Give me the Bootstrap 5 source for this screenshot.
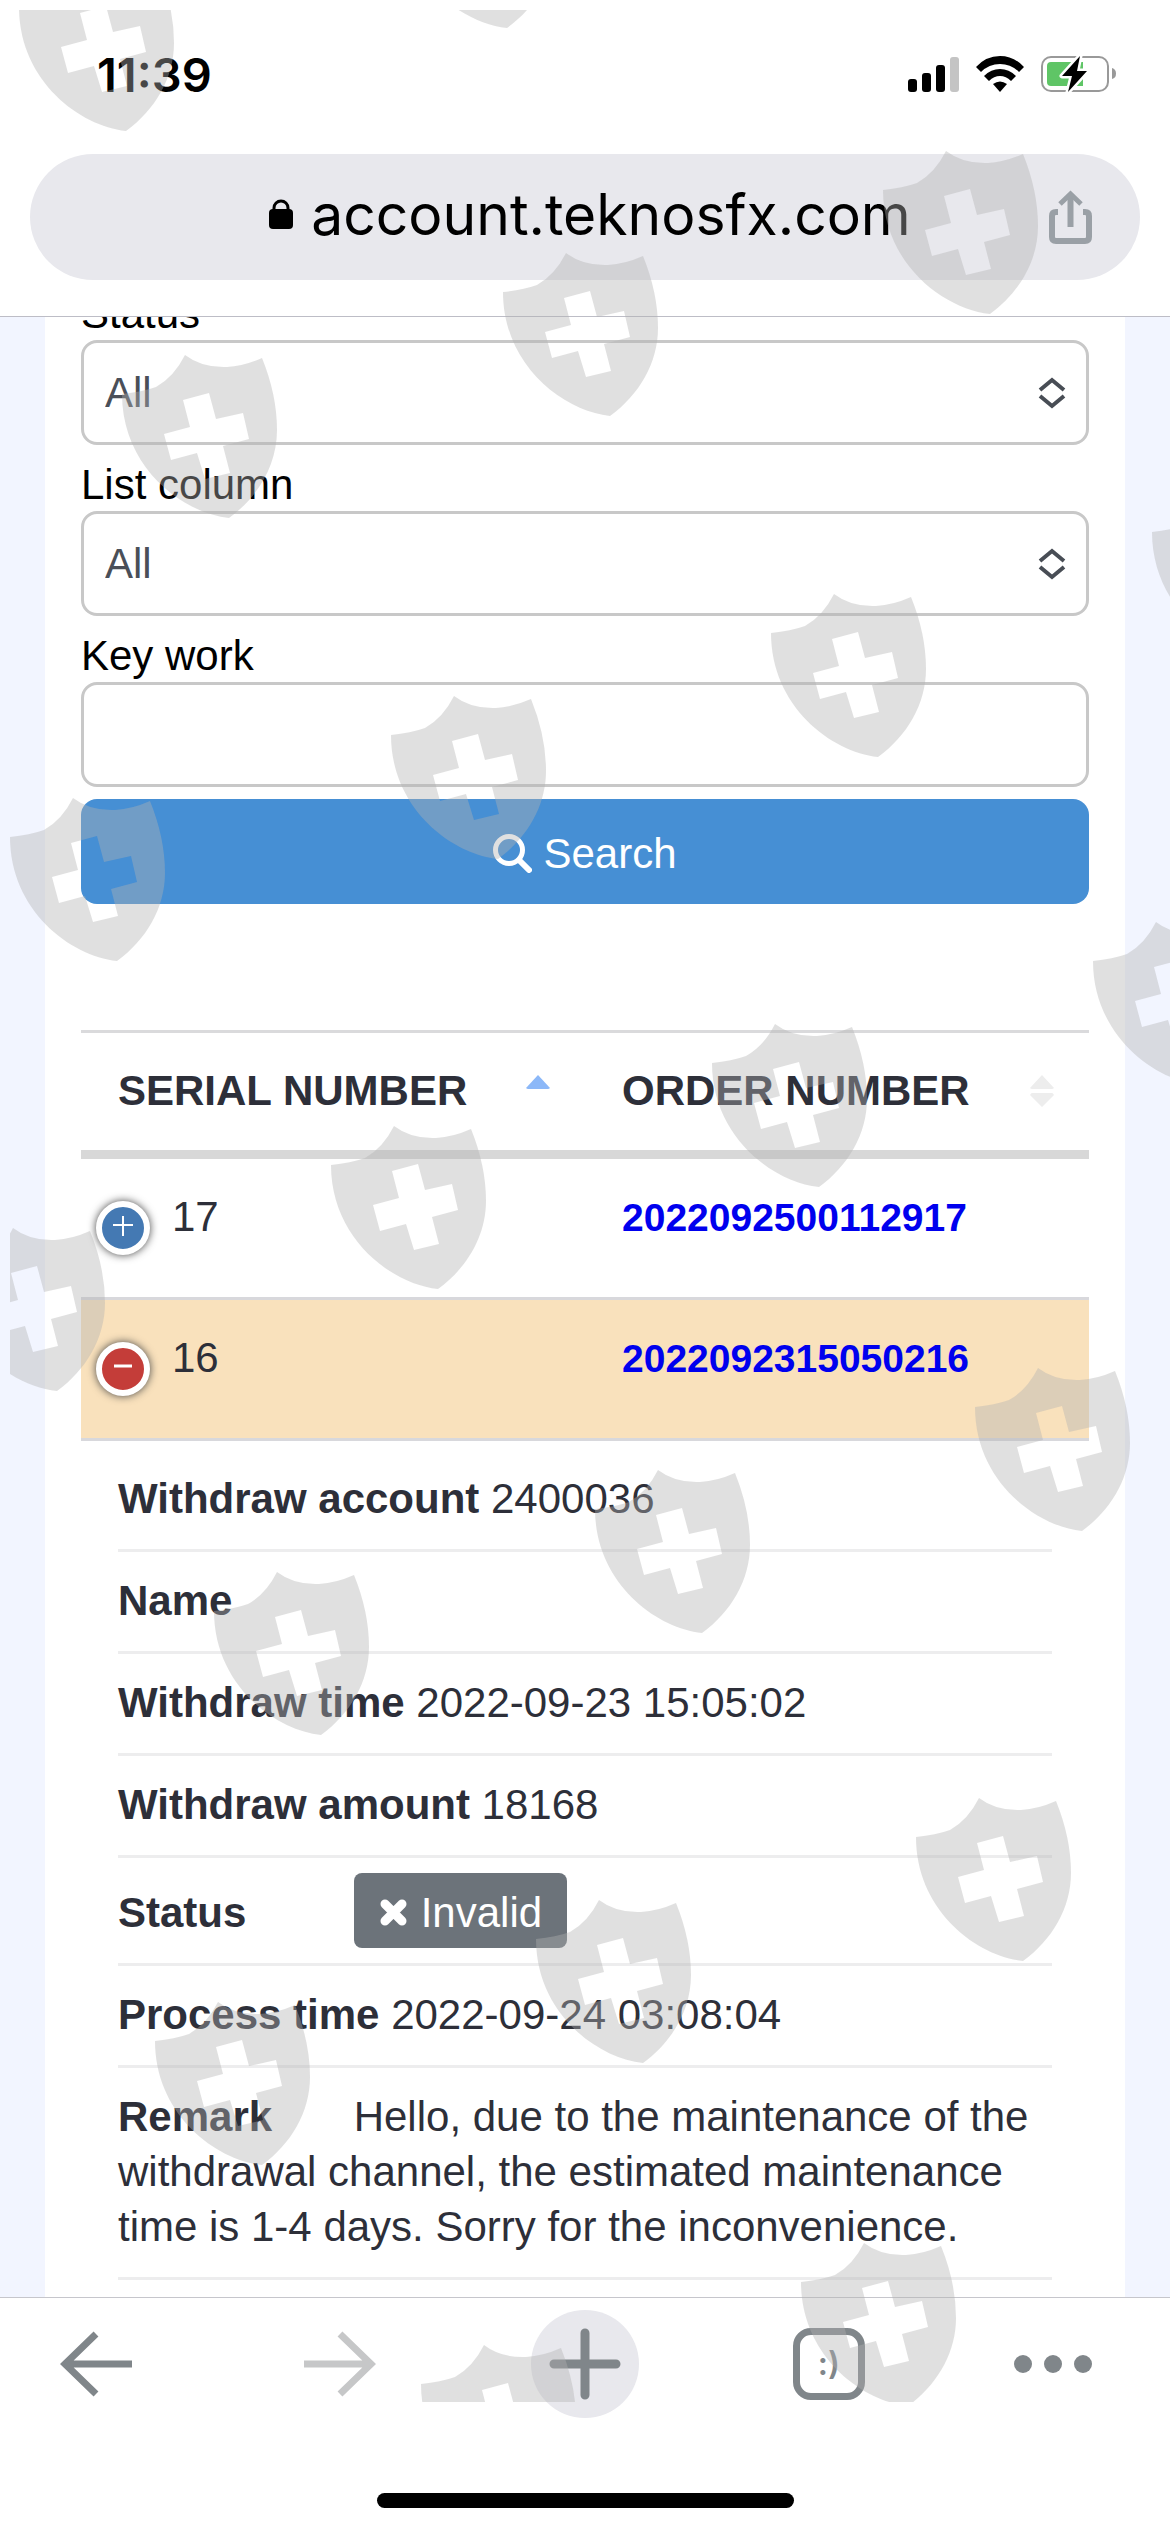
<!DOCTYPE html>
<html lang="en">
<head>
<meta charset="utf-8">
<meta name="viewport" content="width=device-width, initial-scale=1">
<title>Withdraw records</title>
<link href="https://cdn.jsdelivr.net/npm/bootstrap@5.3.0/dist/css/bootstrap.min.css" rel="stylesheet">
<style>
  body { font-family: "Liberation Sans", Arial, sans-serif; font-size: 42px; line-height: 55px; color: #2d2f39; background: #fff; }
  .screen { height: 100vh; min-height: 1200px; }
  svg { display: block; flex: none; }

  /* phone status bar and address bar */
  .top-chrome { border-bottom: 1px solid #bdbdc6; padding-bottom: 36px; font-family: Inter, sans-serif; color: #000; }
  .phone-status { height: 154px; padding: 0 54px 6px 97px; }
  .phone-status time { font-size: 47px; font-weight: 600; }
  .phone-icons { gap: 17px; }
  .address-pill { margin: 0 30px; height: 126px; border-radius: 63px; background: #e8e8ed; padding: 0 48px 0 101px; }
  .address-pill a { color: #000; font-size: 57px; gap: 18px; padding-bottom: 6px; }
  .plain-btn { border: 0; background: none; padding: 0; }

  /* scrolled page */
  .page-view { background: #f2f5ff; padding: 0 45px; min-height: 0; }
  .record-panel { background: #fff; padding: 0 36px; min-height: 150%; margin-top: -43px; }
  .field-label { display: block; line-height: 52px; padding-top: 14px; color: #000; }
  .form-select, .form-control { height: 105px; font-size: 42px; line-height: 63px; border: 3px solid #c8c8c8; border-radius: 16px; padding: 0 21px; color: #4a4f58; }
  .form-select { background-image: url("data:image/svg+xml,%3Csvg xmlns='http://www.w3.org/2000/svg' viewBox='0 0 28 32'%3E%3Cpath d='M2 13 14 3 26 13M2 19 14 29 26 19' fill='none' stroke='%23484d55' stroke-width='4'/%3E%3C/svg%3E"); background-size: 28px 32px; background-position: right 20px center; }
  .search-btn { height: 105px; margin-top: 12px; border-radius: 16px; background: #468fd4; color: #fff; font-size: 42px; gap: 11px; border: 0; padding-top: 9px; }

  /* order table */
  .order-table { table-layout: fixed; border-collapse: separate; border-spacing: 0; margin: 126px 0 0; border-top: 3px solid #dadadc; color: inherit; }
  .order-table > :not(caption) > * > * { padding: 0 37px; border-bottom: 3px solid #d8d8dc; color: #2d2f39; background: transparent; box-shadow: none; }
  .order-table > thead > tr > th { border-bottom: 9px solid #d8d8d8; height: 126px; padding: 0 35px 2px 37px; vertical-align: middle; }
  .order-table > tbody > tr > td { height: 141px; padding-top: 30px; vertical-align: top; }
  .order-table > tbody > tr > td:first-child { padding-left: 15px; }
  .order-table a { color: #0000ee; font-weight: 700; font-size: 39px; text-decoration: none; }
  .order-table > tbody > tr.is-open > td { background: #f9e1bc; }
  .serial-cell { gap: 22px; }
  .toggle-dot { width: 54px; height: 54px; border: 6px solid #fff; border-radius: 50%; box-shadow: 0 0 9px #444; background: #4479b3; margin-top: 12px; padding: 0; display: grid; place-items: center; }
  .toggle-dot.is-minus { background: #c43d39; }
  .detail-list { padding: 0 37px; margin-top: 9px; }
  .detail-list li { padding: 21px 0 23px; border-bottom: 3px solid #ededee; }
  .detail-list li.status-line { padding: 15px 0; }
  .detail-name { display: inline-block; min-width: 224px; font-weight: 700; }
  .state-tag { display: inline-flex; align-items: baseline; gap: 13px; background: #6c737a; color: #fff; border-radius: 8px; padding: 12px 25px 8px; }

  /* browser toolbar */
  .bottom-chrome { border-top: 1px solid #c6c6cc; height: 235px; padding: 12px 0 24px; background: #fff; }
  .bottom-chrome nav { padding: 0 78px 0 60px; }
  .nav-main { width: 78%; }
  .new-tab { width: 108px; height: 108px; border-radius: 50%; background: #e8e8ed; margin: 0 -18px; display: grid; place-items: center; }
  .tab-box { width: 72px; height: 72px; border: 7px solid #80868a; border-radius: 18px; color: #80868a; font: 600 32px/56px Inter, sans-serif; }
  .home-bar { width: 417px; height: 15px; border-radius: 8px; background: #000; }
  .shield-layer { position: absolute; inset: 0; width: 100%; height: 100%; pointer-events: none; }
</style>
</head>
<body>
<div class="screen d-flex flex-column position-relative overflow-hidden">
  <header class="top-chrome">
    <div class="phone-status d-flex align-items-center justify-content-between">
      <time>11:39</time>
      <div class="phone-icons d-flex align-items-center">
        <svg width="51" height="35" viewBox="0 0 51 35"><rect y="22" width="9" height="13" rx="3"/><rect x="14" y="16" width="9" height="19" rx="3"/><rect x="28" y="8" width="9" height="27" rx="3"/><rect x="42" width="9" height="35" rx="3" fill="#c4c4c4"/></svg>
        <svg width="48" height="36" viewBox="0 0 48 36"><path d="M0 11Q10 0 24 0T48 11L43 16Q35 8 24 8T5 16ZM8 20Q15 13 24 13T40 20L35 25Q30 20 24 20T13 25ZM17 28Q24 23 31 28L24 36Z"/></svg>
        <svg width="75" height="38" viewBox="0 0 75 38"><rect x="1" y="2" width="66" height="34" rx="9" fill="#fff" stroke="#999" stroke-width="2"/><path d="M10 7H42V31H10Q6 31 6 27V11Q6 7 10 7Z" fill="#5fc566"/><path d="M71 13Q75 14 75 18.500T71 24Z" fill="#999"/><path d="M39 1 21 21H31L27 37 46 16H36Z" stroke="#fff" stroke-width="5" stroke-linejoin="round"/><path d="M39 1 21 21H31L27 37 46 16H36Z"/></svg>
      </div>
    </div>
    <div class="address-pill d-flex align-items-center">
      <a href="#" class="flex-grow-1 d-flex align-items-center justify-content-center text-decoration-none">
        <svg width="24" height="30" viewBox="0 0 24 30"><path d="M5 12V9a7 7 0 0 1 14 0v3" fill="none" stroke="#000" stroke-width="3"/><rect y="10" width="24" height="20" rx="4"/></svg>
        <span>account.teknosfx.com</span>
      </a>
      <button type="button" class="plain-btn" aria-label="Share">
        <svg width="43" height="54" viewBox="0 0 43 54" fill="none" stroke="#9aa0a6" stroke-width="6"><path d="M9 22H7Q3 22 3 26V47Q3 51 7 51H36Q40 51 40 47V26Q40 22 36 22H34M21.500 37V5"/><path d="M11 14 21.500 4 32 14" stroke-width="5"/></svg>
      </button>
    </div>
  </header>

  <main class="page-view flex-fill overflow-hidden">
    <div class="record-panel">
      <form>
        <label class="field-label" for="status">Status</label>
        <select class="form-select" id="status"><option>All</option></select>
        <label class="field-label" for="column">List column</label>
        <select class="form-select" id="column"><option>All</option></select>
        <label class="field-label" for="keyword">Key work</label>
        <input class="form-control" id="keyword" type="text">
        <button type="button" class="btn search-btn w-100 d-flex align-items-center justify-content-center">
          <svg width="39" height="39" viewBox="0 0 39 39" fill="none" stroke="#fff"><circle cx="16" cy="16" r="13.500" stroke-width="5"/><path d="m27 27 9 9" stroke-width="6" stroke-linecap="round"/></svg>
          <span>Search</span>
        </button>
      </form>

      <table class="table order-table">
        <thead>
          <tr>
            <th scope="col"><div class="d-flex align-items-center justify-content-between">SERIAL NUMBER <svg width="24" height="32" viewBox="0 0 24 32"><path d="M12 0 24 13Q23 14 22 14H2Q1 14 0 13Z" fill="#8cb8f8"/></svg></div></th>
            <th scope="col"><div class="d-flex align-items-center justify-content-between">ORDER NUMBER <svg width="24" height="32" viewBox="0 0 24 32" fill="#ededed"><path d="M12 0 24 13Q23 14 22 14H2Q1 14 0 13ZM12 32 24 20Q23 18 22 18H2Q1 18 0 20Z"/></svg></div></th>
          </tr>
        </thead>
        <tbody>
          <tr>
            <td><div class="serial-cell d-flex align-items-start"><button type="button" class="toggle-dot" aria-label="Show details"><svg width="20" height="24" viewBox="0 0 20 24"><path d="M0 9H20M10 -2V20" stroke="#fff" stroke-width="2"/></svg></button><span>17</span></div></td>
            <td><a href="#">2022092500112917</a></td>
          </tr>
          <tr class="is-open">
            <td><div class="serial-cell d-flex align-items-start"><button type="button" class="toggle-dot is-minus" aria-label="Hide details"><svg width="20" height="24" viewBox="0 0 20 24"><path d="M1 9H19" stroke="#fff" stroke-width="3"/></svg></button><span>16</span></div></td>
            <td><a href="#">2022092315050216</a></td>
          </tr>
        </tbody>
      </table>
      <ul class="detail-list list-unstyled mb-0">
        <li><span class="detail-name">Withdraw account</span> 2400036</li>
        <li><span class="detail-name">Name</span></li>
        <li><span class="detail-name">Withdraw time</span> 2022-09-23 15:05:02</li>
        <li><span class="detail-name">Withdraw amount</span> 18168</li>
        <li class="status-line"><span class="detail-name">Status</span> <span class="state-tag"><svg width="29" height="29" viewBox="0 0 29 29"><path d="M6 6 23 23M23 6 6 23" stroke="#fff" stroke-width="9" stroke-linecap="round"/></svg>Invalid</span></li>
        <li><span class="detail-name">Process time</span> 2022-09-24 03:08:04</li>
        <li><span class="detail-name">Remark</span> Hello, due to the maintenance of the withdrawal channel, the estimated maintenance time is 1-4 days. Sorry for the inconvenience.</li>
      </ul>
    </div>
  </main>

  <footer class="bottom-chrome d-flex flex-column justify-content-between">
    <nav class="d-flex align-items-center justify-content-between">
      <div class="nav-main d-flex align-items-center justify-content-between">
        <button type="button" class="plain-btn" aria-label="Back"><svg width="72" height="66" viewBox="0 0 72 66" fill="none" stroke="#80868a" stroke-width="7"><path d="M72 33H6M36 3 5 33 36 63"/></svg></button>
        <button type="button" class="plain-btn" aria-label="Forward"><svg width="72" height="66" viewBox="0 0 72 66" fill="none" stroke="#c6c7c8" stroke-width="7"><path d="M0 33H66M36 3 67 33 36 63"/></svg></button>
        <button type="button" class="plain-btn new-tab" aria-label="New tab"><svg width="72" height="72" viewBox="0 0 72 72" stroke="#80868a" stroke-width="9" stroke-linecap="round"><path d="M5 36H67M36 5V67"/></svg></button>
        <button type="button" class="plain-btn tab-box" aria-label="Tabs">:)</button>
      </div>
      <button type="button" class="plain-btn" aria-label="More"><svg width="78" height="18" viewBox="0 0 78 18" fill="#80868a"><circle cx="9" cy="9" r="9"/><circle cx="39" cy="9" r="9"/><circle cx="69" cy="9" r="9"/></svg></button>
    </nav>
    <div class="home-bar mx-auto"></div>
  </footer>

  <svg class="shield-layer" aria-hidden="true">
    <defs>
      <clipPath id="layerEdge"><rect x="10" y="10" width="4000" height="2392"/></clipPath>
      <path id="shield" fill-rule="evenodd" d="M0 39Q20 37 34 32Q52 22 63 0Q80 13 105 12Q122 11 140 3Q155 40 155 75C155 110 136 142 107 163C60 158 0 112 0 39ZM61 45 87 38 94 64 121 58 127 84 101 91 108 118 83 124 75 98 49 105 42 79 68 72Z"/>
    </defs>
    <g clip-path="url(#layerEdge)" fill="#b1b1b1" fill-opacity=".4">
      <use href="#shield" x="19" y="-32"/><use href="#shield" x="400" y="-135"/>
      <use href="#shield" x="883" y="151"/><use href="#shield" x="503" y="253"/><use href="#shield" x="122" y="355"/>
      <use href="#shield" x="1152" y="493"/><use href="#shield" x="771" y="594"/><use href="#shield" x="391" y="696"/><use href="#shield" x="10" y="798"/>
      <use href="#shield" x="1093" y="922"/><use href="#shield" x="712" y="1024"/><use href="#shield" x="331" y="1126"/><use href="#shield" x="-50" y="1228"/>
      <use href="#shield" x="975" y="1368"/><use href="#shield" x="595" y="1470"/><use href="#shield" x="214" y="1572"/>
      <use href="#shield" x="916" y="1798"/><use href="#shield" x="536" y="1900"/><use href="#shield" x="155" y="2002"/>
      <use href="#shield" x="801" y="2243"/><use href="#shield" x="421" y="2345"/>
    </g>
  </svg>
</div>
<script src="https://cdn.jsdelivr.net/npm/bootstrap@5.3.0/dist/js/bootstrap.bundle.min.js"></script>
</body>
</html>
